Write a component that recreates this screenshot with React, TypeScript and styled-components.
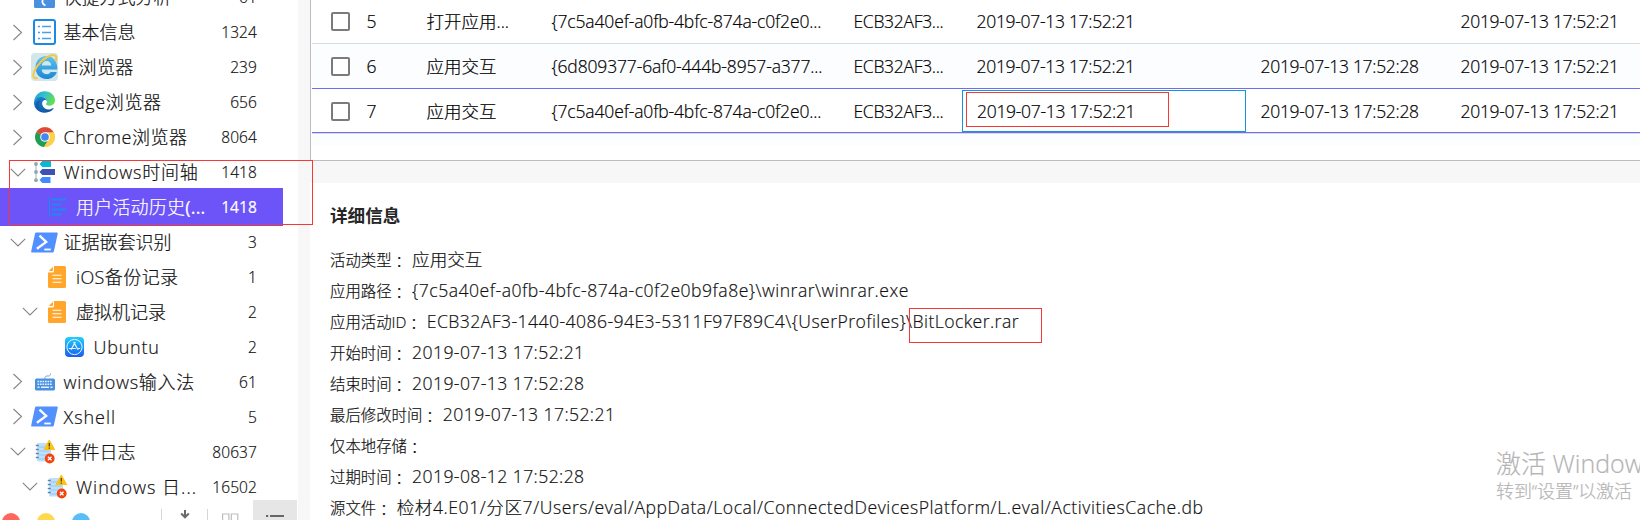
import React from 'react';
import styled, { createGlobalStyle, css } from 'styled-components';

const GlobalStyle = createGlobalStyle`
  * { box-sizing: border-box; }
  body {
    margin: 0;
    background: #fff;
    color: #111;
    font-family: "Open Sans", "Noto Sans CJK SC Light", "Noto Sans CJK SC", sans-serif;
    font-weight: 300;
    -webkit-text-stroke: 0.2px currentColor;
    overflow: hidden;
  }
`;

const Window = styled.div`
  position: relative;
  display: flex;
  width: 1640px;
  height: 520px;
  overflow: hidden;
  background: #fff;
`;

/* ---------- sidebar ---------- */

const Sidebar = styled.aside`
  display: flex;
  flex-direction: column;
  flex: none;
  width: 298px;
`;

const Tree = styled.ul`
  height: 500px;
  margin: 0;
  padding: 0;
  list-style: none;
  overflow: hidden;
`;

const TreeList = styled.div`
  margin-top: -20px;
`;

const TreeRow = styled.li<{ $indent: number; $active?: boolean }>`
  display: flex;
  align-items: center;
  width: 283px;
  height: 34.94px;
  padding-left: ${(p) => 4 + p.$indent}px;
  padding-right: 26px;
  ${(p) =>
    p.$active &&
    css`
      height: 38px;
      margin: -1.53px 0;
      background: #6c54f8;
      color: #fff;
      font-weight: 400;
    `}
`;

const Arrow = styled.span`
  display: flex;
  justify-content: center;
  flex: none;
  width: 27px;
`;

const IconBox = styled.span`
  display: flex;
  align-items: center;
  justify-content: center;
  flex: none;
  width: 27px;
  height: 30px;
  margin-right: 5.5px;
  svg { display: block; overflow: visible; }
`;

const Label = styled.span<{ $track: number }>`
  flex: none;
  font-size: 18px;
  line-height: 26px;
  white-space: nowrap;
  letter-spacing: ${(p) => p.$track}px;
`;

const Count = styled.span`
  margin-left: auto;
  font-size: 15.5px;
  line-height: 24px;
  letter-spacing: 0.1px;
`;

const BottomBar = styled.div`
  display: flex;
  align-items: flex-start;
  height: 20px;
  overflow: hidden;
`;

const Dots = styled.div`
  display: flex;
  gap: 17px;
  width: 161px;
  padding: 13px 0 0 2px;
`;

const Dot = styled.span<{ $color: string }>`
  width: 18px;
  height: 18px;
  border-radius: 50%;
  background: ${(p) => p.$color};
`;

const BarButton = styled.span<{ $active?: boolean; $divided?: boolean }>`
  position: relative;
  flex: none;
  width: ${(p) => (p.$active ? 44 : 46)}px;
  height: 40px;
  background: ${(p) => (p.$active ? '#e6e6e6' : 'transparent')};
  svg { display: block; }
  ${(p) =>
    p.$divided &&
    css`
      &::before {
        content: '';
        position: absolute;
        left: 0;
        top: 9px;
        bottom: 0;
        width: 1px;
        background: #d6d6d6;
      }
    `}
`;

/* ---------- splitter and main ---------- */

const Splitter = styled.div`
  flex: none;
  width: 12px;
  background: #f7f7f7;
`;

const Main = styled.main`
  display: flex;
  flex-direction: column;
  flex: 1;
  min-width: 0;
`;

const TablePane = styled.section`
  height: 161px;
  padding-left: 1px;
  border-left: 1px solid #b9bec2;
  border-bottom: 1px solid #b9bec2;
  overflow: hidden;
`;

const TableRows = styled.div`
  margin-top: -1px;
`;

const rowBorder = { normal: '#d9dcdf', focus: '#6f6cf6' };

const TableRow = styled.div<{ $alt?: boolean; $line: 'normal' | 'focus' }>`
  display: grid;
  grid-template-columns: 40px 60px 125px 302px 123px 284px 200px 194px;
  align-items: center;
  height: 45px;
  background: ${(p) => (p.$alt ? '#fcfdff' : '#fff')};
  border-bottom: 1px solid ${(p) => rowBorder[p.$line]};
`;

const FocusRow = styled(TableRow)`
  height: 44px;
  padding-top: 1px;
`;

const TableFiller = styled.div`
  height: 12px;
  border-top: 1px solid #d9dcdf;
  background: #fcfdff;
`;

const Cell = styled.div<{ $track?: number; $focus?: boolean }>`
  height: ${(p) => (p.$focus ? '42px' : 'auto')};
  padding-left: ${(p) => (p.$focus ? 14 : 14.5)}px;
  font-size: 17.5px;
  line-height: ${(p) => (p.$focus ? '40px' : '26px')};
  white-space: nowrap;
  color: #000;
  letter-spacing: ${(p) => p.$track ?? 0}px;
  border: ${(p) => (p.$focus ? '1px solid #1296db' : '0')};
`;

const CheckBox = styled.span`
  width: 19px;
  height: 19px;
  margin-left: 19px;
  margin-top: 1px;
  border: 2px solid #7b7b7b;
  border-radius: 2px;
  background: #fff;
`;

const Gap = styled.div`
  height: 22px;
  background: #f7f7f7;
`;

const Details = styled.section`
  flex: 1;
  padding: 19px 0 0 20px;
  overflow: hidden;
`;

const Title = styled.h2`
  margin: 0 0 18px;
  font-family: "Noto Sans CJK SC", sans-serif;
  font-size: 17.6px;
  line-height: 26px;
  font-weight: 700;
  color: #262626;
  -webkit-text-stroke: 0;
`;

const Field = styled.div`
  display: flex;
  align-items: baseline;
  height: 30.95px;
  line-height: 26px;
  white-space: nowrap;
`;

const FieldName = styled.span`
  font-size: 15.4px;
`;

const Colon = styled.span`
  width: 20.5px;
  font-family: "Noto Sans CJK JP Light", "Noto Sans CJK JP", sans-serif;
  font-size: 15.4px;
  transform: translateY(1.5px);
`;

const FieldValue = styled.span<{ $track: number }>`
  font-size: 17.6px;
  letter-spacing: ${(p) => p.$track}px;
`;

/* ---------- overlays ---------- */

const Marker = styled.div<{ $x: number; $y: number; $w: number; $h: number }>`
  position: absolute;
  left: ${(p) => p.$x}px;
  top: ${(p) => p.$y}px;
  width: ${(p) => p.$w}px;
  height: ${(p) => p.$h}px;
  border: 1px solid #fb3636;
`;

const Watermark = styled.div`
  position: absolute;
  left: 1496px;
  top: 446px;
  white-space: nowrap;
  color: #b4b4b4;
`;

const WatermarkTitle = styled.div`
  font-size: 25px;
  line-height: 34px;
`;

const WatermarkText = styled.div`
  font-size: 18px;
  line-height: 22px;
  letter-spacing: -0.1px;
`;

/* ---------- icons ---------- */

const ChevronRight = () => (
  <svg width="10" height="17" viewBox="0 0 10 17" fill="none" stroke="#858585" strokeWidth="1.1">
    <path d="M.5 1l8 7.5-8 7.500" />
  </svg>
);

const ChevronDown = () => (
  <svg width="16" height="9" viewBox="0 0 16 9" fill="none" stroke="#858585" strokeWidth="1.1">
    <path d="M.8 .8L8 8 15.2 .8" />
  </svg>
);

const ShortcutIcon = () => (
  <svg width="21" height="21" viewBox="0 0 21 21">
    <rect width="21" height="21" rx="1.5" fill="#4a90e2" />
    <path d="M11.5 18.5c-3-1-4-4-2-7.500" fill="none" stroke="#fff" strokeWidth="1.8" />
  </svg>
);

const InfoIcon = () => (
  <svg width="23" height="26" viewBox="0 0 23 26">
    <rect x="1" y="1" width="21" height="24" rx="2" fill="#fff" stroke="#1e88e5" strokeWidth="2" />
    <path d="M9 7.500h9M9 13.500h9M9 19.500h9M5 7.500h2M5 13.500h2M5 19.500h2" stroke="#4aa0ea" strokeWidth="1.3" />
  </svg>
);

const IeIcon = () => (
  <svg width="27" height="28" viewBox="0 0 27 28">
    <defs>
      <linearGradient id="ie" x1="0" y1="0" x2="0" y2="1">
        <stop offset="0" stopColor="#5cc4f2" />
        <stop offset="1" stopColor="#1a86d8" />
      </linearGradient>
    </defs>
    <rect width="27" height="28" rx="4" fill="#d3e6e8" />
    <path
      fill="url(#ie)"
      fillRule="evenodd"
      d="M15.500 3C9 3 4.500 8 4.500 14.500S9 26 15.500 26c5 0 9-2.700 10.300-7h-6.200c-.9 1.500-2.300 2.200-4 2.200-2.800 0-4.700-1.900-4.900-4.700h15.600C26.700 8.600 22.500 3 15.500 3zM10.800 12.400c.4-2.600 2.200-4.400 4.800-4.400s4.400 1.800 4.700 4.400z"
    />
    <path
      d="M24.500 8.500C26.500 4 25 1.300 20.500 2.300 13.500 4 6 11.500 3 19c-1.600 4.200-.8 7.300 3.500 5.700"
      fill="none"
      stroke="#f6c744"
      strokeWidth="2"
    />
  </svg>
);

const EdgeIcon = () => (
  <svg width="21" height="22" viewBox="0 0 21 22">
    <defs>
      <linearGradient id="edgeTop" x1="0" y1="0" x2="1" y2=".35">
        <stop offset="0" stopColor="#219fdb" />
        <stop offset=".5" stopColor="#2fc0cf" />
        <stop offset="1" stopColor="#63dc5b" />
      </linearGradient>
      <linearGradient id="edgeLow" x1="0" y1="0" x2="1" y2="1">
        <stop offset="0" stopColor="#1b8ad6" />
        <stop offset="1" stopColor="#104a94" />
      </linearGradient>
    </defs>
    <path
      fill="url(#edgeTop)"
      d="M0 11C.5 4.500 5 .3 10.600.3 16.700.3 21 4.500 21 9.300c0 3.400-2.300 5.400-5.200 5.400-2.400 0-3.700-.8-3.700-1.700 0-.6.900-1 .9-2.500 0-2.300-2.200-4.400-5.200-4.400C4 6.100 1.200 8.300 0 11z"
    />
    <path
      fill="url(#edgeLow)"
      d="M0 11.500C.6 8 3.600 6 7.500 6c3 0 5.300 1.700 5.500 4.200-.7-1.200-2-1.400-3-1-1.700.8-2.200 2.700-1.700 4.500.8 3.200 4 5.100 7.200 4.700 1.400-.1 2.600-.8 3.600-1.300.5-.2.700.1.500.5C17.900 20 15 21.700 11 21.700 4.500 21.700-.3 17.300 0 11.500z"
    />
    <path fill="#145ead" d="M6.300 9.500c-2.600 3.600-1.500 9.500 3.600 12C4 20.700.5 16.500 1.800 12.500c.9-2 2.500-3 4.500-3z" />
  </svg>
);

const ChromeIcon = () => (
  <svg width="20" height="20" viewBox="0 0 20 20">
    <circle cx="10" cy="10" r="10" fill="#fdd04a" />
    <path d="M10 10L1.340 5A10 10 0 0 0 8.900 19.940L13.900 12.300z" fill="#1e9e58" />
    <path d="M10 10L1.340 5A10 10 0 0 1 18.660 5.300z" fill="#dc4a3e" />
    <path d="M10 5.300h8.800A10 10 0 0 1 9 19.950l5-7.600z" fill="#fdd04a" />
    <circle cx="10" cy="10" r="4.800" fill="#fff" />
    <circle cx="10" cy="10" r="3.800" fill="#4586f3" />
  </svg>
);

const TimelineIcon = () => (
  <svg width="21" height="22" viewBox="0 0 21 22">
    <path d="M2 3v16" stroke="#9fb4be" strokeWidth="1" />
    <g fill="#8fa6b1">
      <circle cx="2" cy="3" r="1.900" />
      <circle cx="2" cy="11" r="1.900" />
      <circle cx="2" cy="19.200" r="1.900" />
    </g>
    <path d="M5.500 3l2.800-3H17v6H8.300z" fill="#00bcd4" />
    <path d="M5.500 11l2.800-3H21v6H8.300z" fill="#3f51b5" />
    <path d="M5.500 19l2.800-3H16.500v6H8.300z" fill="#448aff" />
  </svg>
);

const HistoryIcon = () => (
  <svg width="18" height="20" viewBox="0 0 18 20" fill="none" stroke="#1e88f5">
    <path d="M1.500 0v20" strokeWidth="1.300" />
    <path d="M4 2.500h14M4 7.500h9M4 12.500h14M4 17.500h9" strokeWidth="1.800" />
  </svg>
);

const ShellIcon = () => (
  <svg width="27" height="21" viewBox="0 0 27 21">
    <path d="M5.500 .5h20.200c.8 0 1.200.5 1 1.300L22.900 19.200c-.2.800-.8 1.300-1.600 1.300H1.200c-.8 0-1.200-.5-1-1.300L4 1.800C4.200 1 4.700.5 5.500.5z" fill="#528fff" />
    <path d="M8.500 3.700l6.700 6.300-9.300 6.700" fill="none" stroke="#fff" strokeWidth="2.300" />
    <path d="M13.300 17.500h6.500" stroke="#fff" strokeWidth="1.800" />
  </svg>
);

const DocIcon = () => (
  <svg width="18" height="22" viewBox="0 0 18 22">
    <path d="M6 0h10.500A1.500 1.500 0 0 1 18 1.500v19a1.500 1.500 0 0 1-1.500 1.500h-15A1.500 1.500 0 0 1 0 20.500V6.500h4.500A1.500 1.500 0 0 0 6 5z" fill="#ffa62b" />
    <path d="M5 .8V4a1 1 0 0 1-1 1H.8z" fill="#ffa62b" />
    <path d="M4.500 9.200h9M4.500 12.700h9M4.500 16.200h9" stroke="#fff" strokeWidth="1.100" />
  </svg>
);

const StoreIcon = () => (
  <svg width="19" height="20" viewBox="0 0 19 20">
    <defs>
      <linearGradient id="store" x1="0" y1="0" x2="0" y2="1">
        <stop offset="0" stopColor="#1fd0fb" />
        <stop offset="1" stopColor="#1b5cf0" />
      </linearGradient>
    </defs>
    <rect width="19" height="20" rx="4" fill="url(#store)" />
    <g fill="none" stroke="#e4f4ff">
      <circle cx="9.500" cy="10" r="7.600" strokeWidth="1" />
      <path d="M10.300 5L6 12.800M8.700 5l4.300 7.800M3.800 11.500h7M13 11.500h2.200" strokeWidth="1.200" />
    </g>
  </svg>
);

const KeyboardIcon = () => (
  <svg width="20" height="18" viewBox="0 0 20 18">
    <path d="M10 6V4.500c0-1 1-1.500 2-1.500h1.500C15 3 15.500 2 15.500.5" fill="none" stroke="#6aa5e6" strokeWidth="1" />
    <rect y="5.500" width="20" height="12" rx="1.500" fill="#4a90e2" />
    <path d="M2.500 8.500h15M2.500 11.300h15" stroke="#e6f1fd" strokeWidth="1.400" strokeDasharray="1.700 .8" />
    <path d="M2.500 14.300h2M6 14.300h8M15.500 14.300h2" stroke="#e6f1fd" strokeWidth="1.400" />
  </svg>
);

const LogIcon = () => (
  <svg width="20" height="24" viewBox="0 0 20 24">
    <rect x="2" y="3" width="14" height="18.500" rx="1" fill="#bfe0fb" />
    <path d="M3.500 7h11M3.500 11h11M3.500 15h11M3.500 19h11" stroke="#a3d0f6" strokeWidth="1.500" />
    <path d="M.8 5.500h3M.8 9.500h3M.8 13.500h3M.8 17.500h3" stroke="#5b83ad" strokeWidth="1.400" />
    <path d="M14.300 0l5.300 9.500H9z" fill="#fbc21a" stroke="#fbc21a" strokeLinejoin="round" />
    <path d="M14.300 3v3.600M14.300 7.500v1.200" stroke="#5a4512" strokeWidth="1.300" />
    <circle cx="14.700" cy="18.500" r="4.900" fill="#f4430f" />
    <path d="M12.900 16.700l3.600 3.600M16.500 16.700l-3.600 3.600" stroke="#fff" strokeWidth="1.400" />
  </svg>
);

const DownloadGlyph = () => (
  <svg width="46" height="20" viewBox="0 0 46 20">
    <path d="M24 10v7M20.200 13.500L24 17.300l3.800-3.800" fill="none" stroke="#6a6a6a" strokeWidth="2" />
  </svg>
);

const BookGlyph = () => (
  <svg width="46" height="20" viewBox="0 0 46 20" fill="none" stroke="#bdbdbd" strokeWidth="1.200">
    <path d="M15.600 20v-6h6.300v6M24.300 20v-6h6.500v6" />
  </svg>
);

const ListGlyph = () => (
  <svg width="44" height="20" viewBox="0 0 44 20" stroke="#666" strokeWidth="2">
    <path d="M13 16h2.200M17 16h14" />
  </svg>
);

/* ---------- data ---------- */

type TreeItem = {
  label: string;
  count: number;
  icon: React.FC;
  indent?: number;
  arrow?: 'right' | 'down';
  active?: boolean;
  track?: number;
};

const tree: TreeItem[] = [
  { label: '快捷方式分析', count: 61, icon: ShortcutIcon },
  { label: '基本信息', count: 1324, icon: InfoIcon, arrow: 'right' },
  { label: 'IE浏览器', count: 239, icon: IeIcon, arrow: 'right', track: 0.3 },
  { label: 'Edge浏览器', count: 656, icon: EdgeIcon, arrow: 'right', track: 0.6 },
  { label: 'Chrome浏览器', count: 8064, icon: ChromeIcon, arrow: 'right', track: 0.55 },
  { label: 'Windows时间轴', count: 1418, icon: TimelineIcon, arrow: 'down', track: 0.75 },
  { label: '用户活动历史(...', count: 1418, icon: HistoryIcon, indent: 12.5, active: true, track: 0.2 },
  { label: '证据嵌套识别', count: 3, icon: ShellIcon, arrow: 'down' },
  { label: 'iOS备份记录', count: 1, icon: DocIcon, indent: 12.5, track: 0.4 },
  { label: '虚拟机记录', count: 2, icon: DocIcon, indent: 12.5, arrow: 'down' },
  { label: 'Ubuntu', count: 2, icon: StoreIcon, indent: 30, track: 0.75 },
  { label: 'windows输入法', count: 61, icon: KeyboardIcon, arrow: 'right', track: 0.7 },
  { label: 'Xshell', count: 5, icon: ShellIcon, arrow: 'right', track: 0.95 },
  { label: '事件日志', count: 80637, icon: LogIcon, arrow: 'down' },
  { label: 'Windows 日...', count: 16502, icon: LogIcon, indent: 12.5, arrow: 'down', track: 1 },
];

const rows = [
  { id: 5, type: '打开应用...', path: '{7c5a40ef-a0fb-4bfc-874a-c0f2e0...', app: 'ECB32AF3...', start: '2019-07-13 17:52:21', end: '', changed: '2019-07-13 17:52:21' },
  { id: 6, type: '应用交互', path: '{6d809377-6af0-444b-8957-a377...', app: 'ECB32AF3...', start: '2019-07-13 17:52:21', end: '2019-07-13 17:52:28', changed: '2019-07-13 17:52:21' },
  { id: 7, type: '应用交互', path: '{7c5a40ef-a0fb-4bfc-874a-c0f2e0...', app: 'ECB32AF3...', start: '2019-07-13 17:52:21', end: '2019-07-13 17:52:28', changed: '2019-07-13 17:52:21' },
];

const fields = [
  { name: '活动类型', value: '应用交互', track: 0 },
  { name: '应用路径', value: '{7c5a40ef-a0fb-4bfc-874a-c0f2e0b9fa8e}\\winrar\\winrar.exe', track: 0.49 },
  { name: '应用活动ID', value: 'ECB32AF3-1440-4086-94E3-5311F97F89C4\\{UserProfiles}\\BitLocker.rar', track: 0.43 },
  { name: '开始时间', value: '2019-07-13 17:52:21', track: 0.4 },
  { name: '结束时间', value: '2019-07-13 17:52:28', track: 0.4 },
  { name: '最后修改时间', value: '2019-07-13 17:52:21', track: 0.4 },
  { name: '仅本地存储', value: '', track: 0 },
  { name: '过期时间', value: '2019-08-12 17:52:28', track: 0.4 },
  { name: '源文件', value: '检材4.E01/分区7/Users/eval/AppData/Local/ConnectedDevicesPlatform/L.eval/ActivitiesCache.db', track: 0.55 },
];

export default function App() {
  return (
    <>
      <GlobalStyle />
      <Window>
        <Sidebar>
          <Tree>
            <TreeList>
              {tree.map(({ label, count, icon: Icon, indent = 0, arrow, active, track = 0 }) => (
                <TreeRow key={label} $indent={indent} $active={active}>
                  <Arrow>
                    {arrow === 'right' && <ChevronRight />}
                    {arrow === 'down' && <ChevronDown />}
                  </Arrow>
                  <IconBox><Icon /></IconBox>
                  <Label $track={track}>{label}</Label>
                  <Count>{count}</Count>
                </TreeRow>
              ))}
            </TreeList>
          </Tree>
          <BottomBar>
            <Dots>
              <Dot $color="#ff665c" />
              <Dot $color="#ffd850" />
              <Dot $color="#58bdf9" />
            </Dots>
            <BarButton $divided><DownloadGlyph /></BarButton>
            <BarButton $divided><BookGlyph /></BarButton>
            <BarButton $active><ListGlyph /></BarButton>
          </BottomBar>
        </Sidebar>
        <Splitter />
        <Main>
          <TablePane>
            <TableRows>
              {rows.map((r) => {
                const focused = r.id === 7;
                const Row = focused ? FocusRow : TableRow;
                return (
                  <Row key={r.id} $alt={r.id === 6} $line={r.id === 5 ? 'normal' : 'focus'}>
                    <CheckBox />
                    <Cell>{r.id}</Cell>
                    <Cell>{r.type}</Cell>
                    <Cell $track={-0.15}>{r.path}</Cell>
                    <Cell $track={-0.3}>{r.app}</Cell>
                    <Cell $track={-0.3} $focus={focused}>{r.start}</Cell>
                    <Cell $track={-0.3}>{r.end}</Cell>
                    <Cell $track={-0.3}>{r.changed}</Cell>
                  </Row>
                );
              })}
              <TableFiller />
            </TableRows>
          </TablePane>
          <Gap />
          <Details>
            <Title>详细信息</Title>
            {fields.map((f) => (
              <Field key={f.name}>
                <FieldName>{f.name}</FieldName>
                <Colon>：</Colon>
                <FieldValue $track={f.track}>{f.value}</FieldValue>
              </Field>
            ))}
          </Details>
        </Main>
        <Marker $x={9} $y={160} $w={304} $h={65} />
        <Marker $x={966} $y={92} $w={203} $h={35} />
        <Marker $x={909} $y={308} $w={133} $h={35} />
        <Watermark>
          <WatermarkTitle>激活 Windows</WatermarkTitle>
          <WatermarkText>转到“设置”以激活</WatermarkText>
        </Watermark>
      </Window>
    </>
  );
}
